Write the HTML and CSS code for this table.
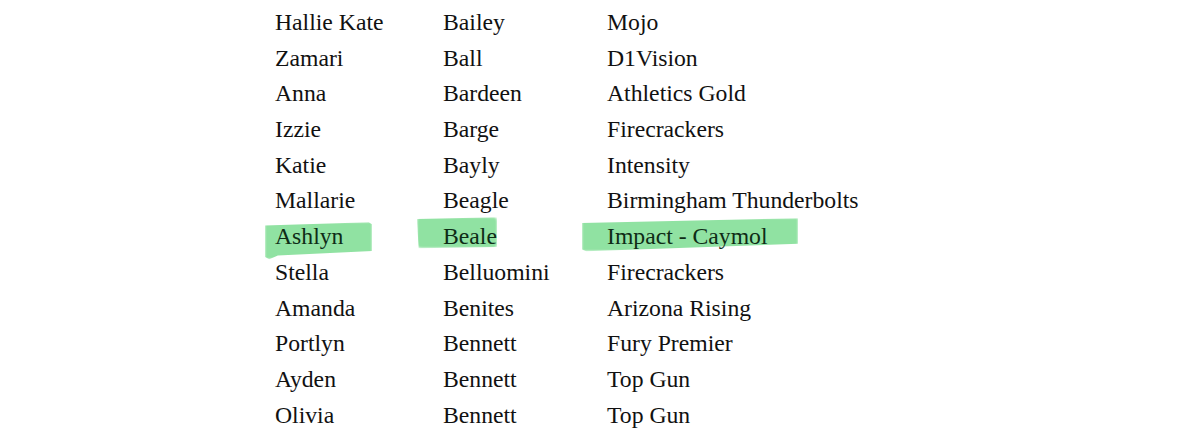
FILE: index.html
```html
<!DOCTYPE html>
<html>
<head>
<meta charset="utf-8">
<link rel="stylesheet" href="styles.css">
</head>
<body>
<div class="table">
  <div class="cell">Hallie Kate</div><div class="cell">Bailey</div><div class="cell">Mojo</div>
  <div class="cell">Zamari</div><div class="cell">Ball</div><div class="cell">D1Vision</div>
  <div class="cell">Anna</div><div class="cell">Bardeen</div><div class="cell">Athletics Gold</div>
  <div class="cell">Izzie</div><div class="cell">Barge</div><div class="cell">Firecrackers</div>
  <div class="cell">Katie</div><div class="cell">Bayly</div><div class="cell">Intensity</div>
  <div class="cell">Mallarie</div><div class="cell">Beagle</div><div class="cell">Birmingham Thunderbolts</div>
  <div class="cell"><span class="hl hl-first"></span><span class="txt">Ashlyn</span></div>
  <div class="cell"><span class="hl hl-last"></span><span class="txt">Beale</span></div>
  <div class="cell"><span class="hl hl-team"></span><span class="txt">Impact - Caymol</span></div>
  <div class="cell">Stella</div><div class="cell">Belluomini</div><div class="cell">Firecrackers</div>
  <div class="cell">Amanda</div><div class="cell">Benites</div><div class="cell">Arizona Rising</div>
  <div class="cell">Portlyn</div><div class="cell">Bennett</div><div class="cell">Fury Premier</div>
  <div class="cell">Ayden</div><div class="cell">Bennett</div><div class="cell">Top Gun</div>
  <div class="cell">Olivia</div><div class="cell">Bennett</div><div class="cell">Top Gun</div>
</div>
</body>
</html>
```
FILE: styles.css
```css
html, body {
  margin: 0;
  padding: 0;
  background: #ffffff;
}
body {
  width: 1200px;
  height: 431px;
  overflow: hidden;
}
.table {
  display: grid;
  grid-template-columns: 168px 164px auto;
  grid-auto-rows: 35.7px;
  padding: 5px 0 0 275px;
  font-family: "Liberation Serif", "Times New Roman", serif;
  font-size: 23.7px;
  line-height: 35.7px;
  color: #111111;
}
.cell {
  position: relative;
  white-space: nowrap;
}
.txt {
  position: relative;
  color: #0e2c16;
}
.hl {
  position: absolute;
  background: #90e2a2;
  filter: blur(0.9px);
}
.hl-first {
  left: -10px;
  top: 3px;
  width: 107px;
  height: 37px;
  clip-path: polygon(0% 9%, 97% 0%, 100% 6%, 100% 78%, 12% 90%, 4% 100%, 0% 94%);
}
.hl-last {
  left: -26px;
  top: -2px;
  width: 80px;
  height: 31px;
  border-radius: 4px;
  clip-path: polygon(0% 6%, 100% 0%, 100% 96%, 2% 100%);
}
.hl-team {
  left: -25px;
  top: -1px;
  width: 216px;
  height: 33px;
  clip-path: polygon(0% 15%, 100% 0%, 100% 78%, 2% 100%, 0% 95%);
}
```
